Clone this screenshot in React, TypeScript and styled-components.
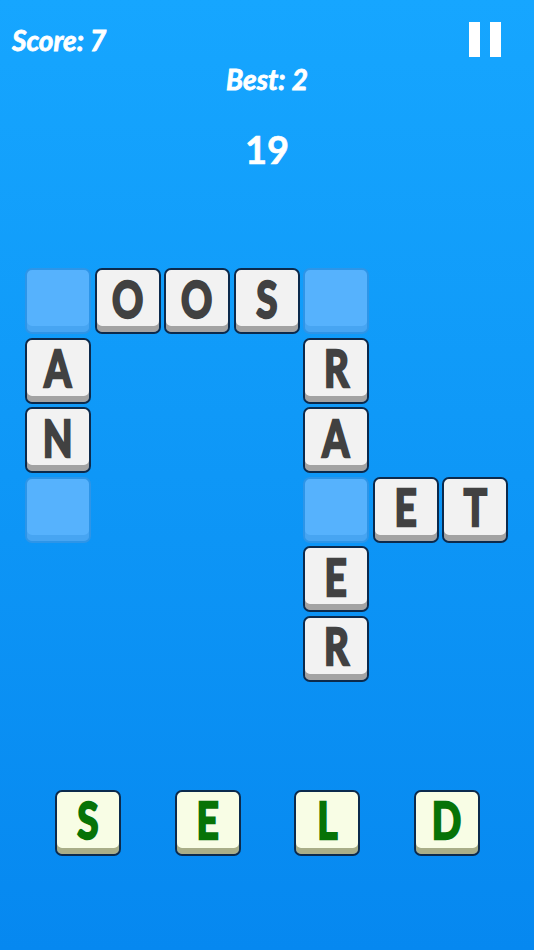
import React from 'react'
import styled, { createGlobalStyle } from 'styled-components'

const Global = createGlobalStyle`
  html, body {
    margin: 0;
    padding: 0;
  }
  body {
    font-family: Lato, "DejaVu Sans", sans-serif;
  }
`

type Cell = { r: number; c: number; ch?: string }

const board: Cell[] = [
  { r: 0, c: 0 },
  { r: 0, c: 1, ch: 'O' },
  { r: 0, c: 2, ch: 'O' },
  { r: 0, c: 3, ch: 'S' },
  { r: 0, c: 4 },
  { r: 1, c: 0, ch: 'A' },
  { r: 1, c: 4, ch: 'R' },
  { r: 2, c: 0, ch: 'N' },
  { r: 2, c: 4, ch: 'A' },
  { r: 3, c: 0 },
  { r: 3, c: 4 },
  { r: 3, c: 5, ch: 'E' },
  { r: 3, c: 6, ch: 'T' },
  { r: 4, c: 4, ch: 'E' },
  { r: 5, c: 4, ch: 'R' },
]

const hand = ['S', 'E', 'L', 'D']

export default function App() {
  return (
    <>
      <Global />
      <S.Screen>
        <S.Header>
          <S.Score>Score: 7</S.Score>
          <S.Pause aria-label="pause">
            <S.PauseBar />
            <S.PauseBar />
          </S.Pause>
        </S.Header>
        <S.Best>Best: 2</S.Best>
        <S.Timer>19</S.Timer>
        <S.Board>
          {board.map((cell, i) =>
            cell.ch ? (
              <S.Tile key={i} $r={cell.r} $c={cell.c}>
                <S.Letter>{cell.ch}</S.Letter>
              </S.Tile>
            ) : (
              <S.Slot key={i} $r={cell.r} $c={cell.c} />
            )
          )}
        </S.Board>
        <S.Hand>
          {hand.map((ch, i) => (
            <S.HandTile key={i}>
              <S.HandLetter>{ch}</S.HandLetter>
            </S.HandTile>
          ))}
        </S.Hand>
      </S.Screen>
    </>
  )
}

const tileBase = `
  box-sizing: border-box;
  width: 66px;
  height: 66px;
  border-radius: 7px;
  display: flex;
  align-items: center;
  justify-content: center;
`

const letterBase = `
  font-family: Lato, "DejaVu Sans", sans-serif;
  font-size: 51px;
  font-weight: bold;
  line-height: 1;
  display: inline-block;
  transform: scaleX(0.76);
  -webkit-text-stroke: 2.5px currentColor;
`

const S = {
  Screen: styled.div`
    width: 534px;
    height: 950px;
    overflow: hidden;
    background: linear-gradient(to bottom, #16a6ff 0%, #0e97f7 50%, #0688f0 100%);
    display: flex;
    flex-direction: column;
    color: #fff;
  `,
  Header: styled.div`
    display: flex;
    justify-content: space-between;
    align-items: flex-start;
    padding: 22px 33px 0 12px;
    height: 36px;
  `,
  Score: styled.div`
    font-size: 28px;
    font-weight: bold;
    font-style: italic;
    line-height: 30px;
    margin-top: 3px;
    -webkit-text-stroke: 0.8px #fff;
  `,
  Pause: styled.div`
    display: flex;
    gap: 10px;
  `,
  PauseBar: styled.div`
    width: 11px;
    height: 35px;
    background: #fff;
  `,
  Best: styled.div`
    text-align: center;
    font-size: 28px;
    font-weight: bold;
    font-style: italic;
    line-height: 30px;
    margin-top: 6px;
    -webkit-text-stroke: 0.8px #fff;
  `,
  Timer: styled.div`
    text-align: center;
    font-size: 38px;
    font-weight: bold;
    line-height: 40px;
    margin-top: 35px;
    -webkit-text-stroke: 0.6px #fff;
  `,
  Board: styled.div`
    display: grid;
    grid-template-columns: repeat(7, 66px);
    grid-template-rows: repeat(6, 66px);
    gap: 3.5px;
    margin: 99px 0 0 25px;
  `,
  Tile: styled.div<{ $r: number; $c: number }>`
    ${tileBase}
    grid-row: ${p => p.$r + 1};
    grid-column: ${p => p.$c + 1};
    background: #f2f2f2;
    border: 2px solid #0c2a4c;
    box-shadow: inset 0 -6px 0 #a3a3a3;
    padding-bottom: 6px;
  `,
  Slot: styled.div<{ $r: number; $c: number }>`
    ${tileBase}
    grid-row: ${p => p.$r + 1};
    grid-column: ${p => p.$c + 1};
    background: #56b2fd;
    border: 2px solid #2d95e8;
    box-shadow: inset 0 -6px 0 #47a5f2;
  `,
  Letter: styled.span`
    ${letterBase}
    color: #414141;
  `,
  Hand: styled.div`
    display: flex;
    gap: 53.5px;
    margin: 108px 0 0 55px;
  `,
  HandTile: styled.div`
    ${tileBase}
    background: #f8fde5;
    border: 2px solid #0c2a4c;
    box-shadow: inset 0 -6px 0 #a9ae88;
    padding-bottom: 6px;
  `,
  HandLetter: styled.span`
    ${letterBase}
    color: #077307;
  `,
}
